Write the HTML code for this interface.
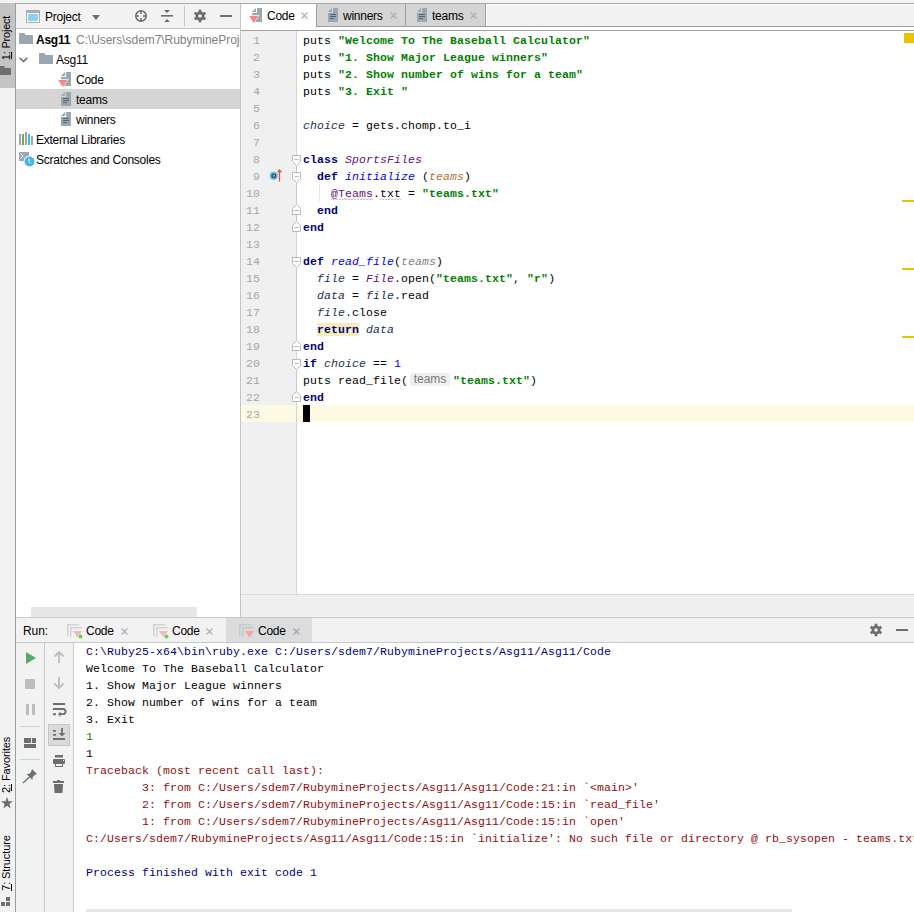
<!DOCTYPE html>
<html><head><meta charset="utf-8">
<style>
*{box-sizing:border-box;margin:0;padding:0}
html,body{width:914px;height:912px;overflow:hidden;background:#f2f2f2;position:relative}
body{font-family:"Liberation Sans",sans-serif;font-size:12px;color:#000}
.a{position:absolute}
.ui{font-family:"Liberation Sans",sans-serif;font-size:12px;white-space:pre;letter-spacing:-0.25px}
.mono{font-family:"Liberation Mono",monospace;font-size:11.5px;letter-spacing:0.1px;white-space:pre}
.ln{position:absolute;left:0;height:17px;line-height:17px}
.kw{color:#000080;font-weight:bold}
.st{color:#008000;font-weight:bold}
.cls{color:#660e7a;font-style:italic}
.mth{color:#0000ff;font-style:italic}
.lv{color:#1d3150;font-style:italic}
.iv{color:#660e7a}
.par{color:#b4703a;font-style:italic}
.unused{color:#808080;font-style:italic}
.num{color:#0000ff}
.csys{color:#000080}
.cerr{color:#8f0f0f}
.cinp{color:#008000}
.hl{background:#f6ebbc}
.wavy{}
.hint{display:inline-block;font-family:"Liberation Sans",sans-serif;font-size:12px;letter-spacing:0;color:#7a7a7a;background:#efefef;border-radius:3px;width:40px;height:13px;line-height:13px;margin:1px 3px 0 2px;text-align:center;vertical-align:top}
.gnum{position:absolute;left:0;width:19px;text-align:right;color:#a6a6a6;height:17px;line-height:17px}
</style></head><body>

<!-- top strip line -->
<div class="a" style="left:0;top:3px;width:914px;height:1px;background:#a9a9a9"></div>

<!-- left tool stripe -->
<div class="a" style="left:0;top:4px;width:15px;height:908px;background:#f2f2f2"></div>
<div class="a" style="left:0;top:3px;width:15px;height:85px;background:#c4c4c4"></div>
<div class="a" style="left:15px;top:3px;width:1px;height:909px;background:#9d9d9d"></div>

<!-- project panel header -->
<div class="a" style="left:16px;top:4px;width:224px;height:24px;background:#f2f2f2"></div>
<div class="a" style="left:16px;top:28px;width:224px;height:1px;background:#c9c9c9"></div>
<!-- project tree -->
<div class="a" style="left:16px;top:29px;width:224px;height:588px;background:#fff"></div>
<div class="a" style="left:16px;top:89px;width:224px;height:20px;background:#d5d5d5"></div>
<div class="a" style="left:31px;top:607px;width:166px;height:10px;background:#e6e6e6"></div>
<div class="a" style="left:240px;top:4px;width:1px;height:613px;background:#c4c4c4"></div>


<!-- ===== project header ===== -->
<svg class="a" style="left:26px;top:10px" width="14" height="13" viewBox="0 0 14 13">
<rect x="0" y="0" width="14" height="13" fill="#a4aeb6"/><rect x="1" y="3" width="12" height="9" fill="#fff"/><rect x="2" y="4" width="10" height="7" fill="#8fd1ec"/></svg>
<div class="a ui" style="left:45px;top:9px;line-height:16px">Project</div>
<svg class="a" style="left:92px;top:15px" width="8" height="5" viewBox="0 0 8 5"><path d="M0 0H8L4 5Z" fill="#6e6e6e"/></svg>
<svg class="a" style="left:134px;top:9px" width="14" height="14" viewBox="0 0 14 14"><circle cx="7" cy="7" r="5.2" fill="none" stroke="#6e6e6e" stroke-width="1.6"/><path d="M7 2v3M7 9v3M2 7h3M9 7h3" stroke="#6e6e6e" stroke-width="1.6"/></svg>
<svg class="a" style="left:160px;top:9px" width="14" height="14" viewBox="0 0 14 14"><path d="M4 1h6L7 4Z M4 13h6L7 10Z" fill="#6e6e6e"/><rect x="1" y="6" width="12" height="1.6" fill="#6e6e6e"/></svg>
<div class="a" style="left:184px;top:6px;width:1px;height:20px;background:#c9c9c9"></div>
<svg class="a" style="left:193px;top:9px" width="14" height="14" viewBox="-0.8 -0.8 15.6 15.6"><g fill="#6e6e6e"><circle cx="7" cy="7" r="5"/><rect x="5.5" y="0" width="3" height="14"/><rect x="5.5" y="0" width="3" height="14" transform="rotate(60 7 7)"/><rect x="5.5" y="0" width="3" height="14" transform="rotate(120 7 7)"/></g><circle cx="7" cy="7" r="2" fill="#f2f2f2"/></svg>
<div class="a" style="left:220px;top:15px;width:12px;height:2px;background:#6e6e6e"></div>

<!-- left stripe text -->
<div class="a ui" style="left:-21px;top:31px;width:54px;height:14px;line-height:14px;font-size:11px;letter-spacing:-0.2px;transform:rotate(-90deg);text-align:center">1: <span>Project</span></div>
<div class="a" style="left:11px;top:52px;width:1px;height:7px;background:#000"></div>
<svg class="a" style="left:0;top:66px" width="11" height="9" viewBox="0 0 11 9"><path d="M0 0H4L5 2H11V9H0Z" fill="#6e6e6e"/></svg>

<!-- ===== project tree ===== -->
<svg class="a" style="left:19px;top:33px" width="14" height="11" viewBox="0 0 14 11"><path d="M0 0H5L7 2H14V11H0Z" fill="#9aa7b0"/></svg>
<div class="a ui" style="left:36px;top:32px;line-height:16px;font-weight:bold">Asg11</div>
<div class="a ui" style="left:76px;top:32px;line-height:16px;color:#808080;width:164px;overflow:hidden;letter-spacing:-0.05px">C:\Users\sdem7\RubymineProjects\Asg11</div>
<svg class="a" style="left:19px;top:57px" width="9" height="6" viewBox="0 0 9 6"><path d="M0.7 0.7L4.5 4.5L8.3 0.7" fill="none" stroke="#6e6e6e" stroke-width="1.6"/></svg>
<svg class="a" style="left:39px;top:53px" width="14" height="11" viewBox="0 0 14 11"><path d="M0 0H5L7 2H14V11H0Z" fill="#9aa7b0"/></svg>
<div class="a ui" style="left:56px;top:52px;line-height:16px">Asg11</div>

<svg class="a" style="left:58px;top:72px" width="13" height="16" viewBox="0 0 13 16"><path d="M3 4L7 0V4Z" fill="#9aa7b0"/><rect x="8" y="0" width="5" height="14" fill="#9aa7b0"/><rect x="3" y="5" width="10" height="9" fill="#9aa7b0"/><path d="M-1 7.2H10.5L4.75 16Z" fill="#fff"/><path d="M0 8H9.5L4.75 15Z" fill="#f98787"/></svg>
<div class="a ui" style="left:76px;top:72px;line-height:16px">Code</div>

<svg class="a" style="left:61px;top:92px" width="10" height="14" viewBox="0 0 10 14"><path d="M0 4L4 0V4Z" fill="#9aa7b0"/><rect x="5" y="0" width="5" height="14" fill="#9aa7b0"/><rect x="0" y="5" width="10" height="9" fill="#9aa7b0"/><path d="M2 6.5h6M2 8.5h6M2 10.5h4" stroke="#5a646c" stroke-width="1"/></svg>
<div class="a ui" style="left:76px;top:92px;line-height:16px">teams</div>
<svg class="a" style="left:61px;top:112px" width="10" height="14" viewBox="0 0 10 14"><path d="M0 4L4 0V4Z" fill="#9aa7b0"/><rect x="5" y="0" width="5" height="14" fill="#9aa7b0"/><rect x="0" y="5" width="10" height="9" fill="#9aa7b0"/><path d="M2 6.5h6M2 8.5h6M2 10.5h4" stroke="#5a646c" stroke-width="1"/></svg>
<div class="a ui" style="left:76px;top:112px;line-height:16px">winners</div>

<svg class="a" style="left:19px;top:132px" width="14" height="13" viewBox="0 0 14 13"><rect x="0" y="2" width="2" height="11" fill="#9aa7b0"/><rect x="3" y="2" width="2" height="11" fill="#62b543"/><rect x="6" y="0" width="2" height="13" fill="#9aa7b0"/><rect x="9" y="2" width="2" height="11" fill="#40b6e0"/><rect x="12" y="4" width="2" height="9" fill="#9aa7b0"/></svg>
<div class="a ui" style="left:36px;top:132px;line-height:16px">External Libraries</div>
<svg class="a" style="left:19px;top:152px" width="16" height="15" viewBox="0 0 16 15"><rect x="0" y="0" width="10" height="9" fill="#9aa7b0"/><path d="M1.5 1.5L4 4L1.5 6.5" fill="none" stroke="#fff" stroke-width="1"/><circle cx="10.5" cy="9.5" r="6" fill="#fff"/><circle cx="10.5" cy="9.5" r="5" fill="#40b6e0"/><path d="M10 6.5V9.5L12 11.5" fill="none" stroke="#fff" stroke-width="1"/></svg>
<div class="a ui" style="left:36px;top:152px;line-height:16px">Scratches and Consoles</div>

<!-- editor tabs bar -->
<div class="a" style="left:241px;top:4px;width:673px;height:22px;background:#f2f2f2;border-top:1px solid #fff"></div>
<div class="a" style="left:241px;top:26px;width:673px;height:1px;background:#a0a0a0"></div>
<div class="a" style="left:241px;top:27px;width:673px;height:3px;background:#fff"></div>
<div class="a" style="left:241px;top:30px;width:673px;height:1px;background:#a0a0a0"></div>
<div class="a" style="left:241px;top:4px;width:75px;height:23px;background:#fff"></div>
<div class="a" style="left:316px;top:4px;width:170px;height:22px;background:#d4d4d4"></div>
<div class="a" style="left:316px;top:4px;width:1px;height:23px;background:#a0a0a0"></div>
<div class="a" style="left:405px;top:4px;width:1px;height:23px;background:#a0a0a0"></div>
<div class="a" style="left:485px;top:4px;width:1px;height:23px;background:#a0a0a0"></div>
<div class="a" style="left:486px;top:4px;width:1px;height:22px;background:#fff"></div>
<svg class="a" style="left:249px;top:8px" width="14" height="16" viewBox="0 0 14 16"><path d="M3 4L7 0V4Z" fill="#9aa7b0"/><rect x="8" y="0" width="5" height="14" fill="#9aa7b0"/><rect x="3" y="5" width="10" height="9" fill="#9aa7b0"/><path d="M-1 7.2H10.5L4.75 16Z" fill="#fff"/><path d="M0 8H9.5L4.75 15Z" fill="#f98787"/></svg>
<div class="a ui" style="left:267px;top:8px;line-height:16px">Code</div>
<svg class="a" style="left:301px;top:12px" width="7" height="7" viewBox="0 0 7 7"><path d="M0.5 0.5L6.5 6.5M6.5 0.5L0.5 6.5" stroke="#a8adb0" stroke-width="1.1"/></svg>
<svg class="a" style="left:328px;top:8px" width="10" height="14" viewBox="0 0 10 14"><path d="M0 4L4 0V4Z" fill="#9aa7b0"/><rect x="5" y="0" width="5" height="14" fill="#9aa7b0"/><rect x="0" y="5" width="10" height="9" fill="#9aa7b0"/><path d="M2 6.5h6M2 8.5h6M2 10.5h4" stroke="#5a646c" stroke-width="1"/></svg>
<div class="a ui" style="left:343px;top:8px;line-height:16px">winners</div>
<svg class="a" style="left:390px;top:12px" width="7" height="7" viewBox="0 0 7 7"><path d="M0.5 0.5L6.5 6.5M6.5 0.5L0.5 6.5" stroke="#a8adb0" stroke-width="1.1"/></svg>
<svg class="a" style="left:417px;top:8px" width="10" height="14" viewBox="0 0 10 14"><path d="M0 4L4 0V4Z" fill="#9aa7b0"/><rect x="5" y="0" width="5" height="14" fill="#9aa7b0"/><rect x="0" y="5" width="10" height="9" fill="#9aa7b0"/><path d="M2 6.5h6M2 8.5h6M2 10.5h4" stroke="#5a646c" stroke-width="1"/></svg>
<div class="a ui" style="left:432px;top:8px;line-height:16px">teams</div>
<svg class="a" style="left:470px;top:12px" width="7" height="7" viewBox="0 0 7 7"><path d="M0.5 0.5L6.5 6.5M6.5 0.5L0.5 6.5" stroke="#a8adb0" stroke-width="1.1"/></svg>
<!-- editor -->
<div class="a" style="left:241px;top:31px;width:673px;height:564px;background:#fff"></div>
<div class="a" style="left:241px;top:31px;width:55px;height:564px;background:#f0f0f0"></div>
<div class="a" style="left:296px;top:31px;width:1px;height:564px;background:#d5d5d5"></div>
<div class="a" style="left:241px;top:405px;width:673px;height:17px;background:#fffae3"></div>
<div class="a" style="left:296px;top:405px;width:1px;height:17px;background:#d5d5d5"></div>
<div class="a" style="left:241px;top:595px;width:673px;height:22px;background:#efefef"></div>
<div class="a" style="left:241px;top:594px;width:673px;height:1px;background:#d9d9d9"></div>

<!-- run header -->
<div class="a" style="left:16px;top:617px;width:898px;height:1px;background:#c9c9c9"></div>
<div class="a" style="left:16px;top:618px;width:898px;height:24px;background:#f2f2f2"></div>
<div class="a" style="left:16px;top:642px;width:898px;height:1px;background:#c9c9c9"></div>
<div class="a" style="left:226px;top:618px;width:86px;height:24px;background:#dcdcdc"></div>
<!-- run toolbars -->
<div class="a" style="left:16px;top:643px;width:28px;height:269px;background:#f2f2f2"></div>
<div class="a" style="left:44px;top:643px;width:1px;height:269px;background:#c9c9c9"></div>
<div class="a" style="left:45px;top:643px;width:28px;height:269px;background:#f2f2f2"></div>
<div class="a" style="left:73px;top:643px;width:1px;height:269px;background:#c9c9c9"></div>
<!-- console -->
<div class="a" style="left:74px;top:643px;width:840px;height:269px;background:#fff"></div>
<div class="a" style="left:86px;top:909px;width:706px;height:3px;background:#e6e6e6"></div>


<!-- ===== run header content ===== -->
<div class="a ui" style="left:23px;top:623px;line-height:16px;letter-spacing:-0.1px">Run:</div>
<svg class="a" style="left:67px;top:624px" width="17" height="16" viewBox="0 0 17 16"><path d="M0.75 12V0.75H12" fill="none" stroke="#cfd3d6" stroke-width="1.5"/><path d="M3.75 13V3.75H15" fill="none" stroke="#cfd3d6" stroke-width="1.5"/><path d="M6 7H15L10.5 13.5Z" fill="#f6b7b7"/><circle cx="13.5" cy="12.5" r="2.6" fill="#f2f2f2"/><circle cx="13.5" cy="12.5" r="2" fill="#5fcf63"/></svg>
<div class="a ui" style="left:86px;top:623px;line-height:16px">Code</div>
<svg class="a" style="left:121px;top:628px" width="7" height="7" viewBox="0 0 7 7"><path d="M0.5 0.5L6.5 6.5M6.5 0.5L0.5 6.5" stroke="#a8adb0" stroke-width="1.1"/></svg>
<svg class="a" style="left:153px;top:624px" width="17" height="16" viewBox="0 0 17 16"><path d="M0.75 12V0.75H12" fill="none" stroke="#cfd3d6" stroke-width="1.5"/><path d="M3.75 13V3.75H15" fill="none" stroke="#cfd3d6" stroke-width="1.5"/><path d="M6 7H15L10.5 13.5Z" fill="#f6b7b7"/><circle cx="13.5" cy="12.5" r="2.6" fill="#f2f2f2"/><circle cx="13.5" cy="12.5" r="2" fill="#5fcf63"/></svg>
<div class="a ui" style="left:172px;top:623px;line-height:16px">Code</div>
<svg class="a" style="left:206px;top:628px" width="7" height="7" viewBox="0 0 7 7"><path d="M0.5 0.5L6.5 6.5M6.5 0.5L0.5 6.5" stroke="#a8adb0" stroke-width="1.1"/></svg>
<svg class="a" style="left:239px;top:624px" width="17" height="16" viewBox="0 0 17 16"><path d="M0.75 12V0.75H12" fill="none" stroke="#c4c8cb" stroke-width="1.5"/><path d="M3.75 13V3.75H15" fill="none" stroke="#c4c8cb" stroke-width="1.5"/><path d="M6 7H15L10.5 13.5Z" fill="#f4a3a3"/></svg>
<div class="a ui" style="left:258px;top:623px;line-height:16px">Code</div>
<svg class="a" style="left:293px;top:628px" width="7" height="7" viewBox="0 0 7 7"><path d="M0.5 0.5L6.5 6.5M6.5 0.5L0.5 6.5" stroke="#a0a5a8" stroke-width="1.1"/></svg>
<svg class="a" style="left:869px;top:623px" width="14" height="14" viewBox="-0.8 -0.8 15.6 15.6"><g fill="#6e6e6e"><circle cx="7" cy="7" r="5"/><rect x="5.5" y="0" width="3" height="14"/><rect x="5.5" y="0" width="3" height="14" transform="rotate(60 7 7)"/><rect x="5.5" y="0" width="3" height="14" transform="rotate(120 7 7)"/></g><circle cx="7" cy="7" r="2" fill="#f2f2f2"/></svg>
<div class="a" style="left:896px;top:629px;width:12px;height:2px;background:#6e6e6e"></div>

<!-- ===== run toolbar icons ===== -->
<svg class="a" style="left:26px;top:652px" width="10" height="12" viewBox="0 0 10 12"><path d="M0 0L10 6L0 12Z" fill="#59a869"/></svg>
<div class="a" style="left:25px;top:679px;width:10px;height:10px;background:#bdbdbd"></div>
<div class="a" style="left:26px;top:704px;width:3px;height:11px;background:#bdbdbd"></div>
<div class="a" style="left:32px;top:704px;width:3px;height:11px;background:#bdbdbd"></div>
<div class="a" style="left:20px;top:726px;width:20px;height:1px;background:#d0d0d0"></div>
<div class="a" style="left:24px;top:738px;width:7px;height:5px;background:#6e6e6e"></div>
<div class="a" style="left:32px;top:738px;width:4px;height:5px;background:#6e6e6e"></div>
<div class="a" style="left:24px;top:744px;width:12px;height:4px;background:#6e6e6e"></div>
<div class="a" style="left:20px;top:759px;width:20px;height:1px;background:#d0d0d0"></div>
<svg class="a" style="left:22px;top:769px" width="16" height="15" viewBox="0 0 16 15"><path d="M10 0L15 5L12.5 6L10.5 8.5L10.5 11L4.5 5L7 5L9 3Z" fill="#6e6e6e"/><path d="M7.5 8L1 14" stroke="#6e6e6e" stroke-width="1.3"/></svg>

<svg class="a" style="left:53px;top:651px" width="12" height="12" viewBox="0 0 12 12"><path d="M6 12V1.5M1.5 5.5L6 1L10.5 5.5" fill="none" stroke="#bdbdbd" stroke-width="1.9"/></svg>
<svg class="a" style="left:53px;top:677px" width="12" height="12" viewBox="0 0 12 12"><path d="M6 0V10.5M1.5 6.5L6 11L10.5 6.5" fill="none" stroke="#bdbdbd" stroke-width="1.9"/></svg>
<svg class="a" style="left:53px;top:702px" width="14" height="15" viewBox="0 0 14 15"><path d="M0 2H12M0 7H10A2.6 2.6 0 0 1 10 12.2H7" fill="none" stroke="#6e6e6e" stroke-width="1.8"/><path d="M7.5 9.4L5 12.2L7.5 15Z" fill="#6e6e6e"/><rect x="0" y="11.2" width="3" height="2" fill="#6e6e6e"/></svg>
<div class="a" style="left:48px;top:724px;width:22px;height:22px;background:#dadada;border:1px solid #c6c6c6"></div>
<svg class="a" style="left:53px;top:728px" width="13" height="13" viewBox="0 0 13 13"><rect x="0" y="2" width="3" height="1.7" fill="#6e6e6e"/><rect x="0" y="6" width="3" height="1.7" fill="#6e6e6e"/><rect x="0" y="10" width="12" height="2" fill="#6e6e6e"/><path d="M9 0V7" stroke="#6e6e6e" stroke-width="1.8"/><path d="M5.5 5H12.5L9 8.5Z" fill="#6e6e6e"/></svg>
<svg class="a" style="left:53px;top:755px" width="12" height="12" viewBox="0 0 12 12"><rect x="2" y="0" width="8" height="2.5" fill="#6e6e6e"/><rect x="0" y="4" width="12" height="5" rx="1" fill="#6e6e6e"/><rect x="2" y="8" width="8" height="4" fill="#6e6e6e"/><rect x="3" y="9" width="6" height="2" fill="#f2f2f2"/><rect x="10" y="5" width="1" height="1" fill="#f2f2f2"/></svg>
<svg class="a" style="left:53px;top:780px" width="11" height="13" viewBox="0 0 11 13"><rect x="0" y="1" width="11" height="2" fill="#6e6e6e"/><rect x="4" y="0" width="3" height="1" fill="#6e6e6e"/><path d="M1 4H10L9.5 12.5Q9.5 13 9 13H2Q1.5 13 1.5 12.5Z" fill="#6e6e6e"/></svg>

<!-- ===== left stripe bottom ===== -->
<div class="a" style="left:11px;top:784px;width:1px;height:7px;background:#000"></div>
<div class="a" style="left:11px;top:884px;width:1px;height:7px;background:#000"></div>
<div class="a ui" style="left:-22px;top:758px;width:56px;height:14px;line-height:14px;font-size:11px;letter-spacing:-0.1px;transform:rotate(-90deg);text-align:center">2: Favorites</div>
<svg class="a" style="left:1px;top:797px" width="12" height="12" viewBox="0 0 12 12"><path d="M6 0L7.5 4.2H12L8.4 6.9L9.7 11.5L6 8.7L2.3 11.5L3.6 6.9L0 4.2H4.5Z" fill="#6e6e6e"/></svg>
<div class="a ui" style="left:-22px;top:856px;width:56px;height:14px;line-height:14px;font-size:11px;letter-spacing:-0.1px;transform:rotate(-90deg);text-align:center">7: Structure</div>
<svg class="a" style="left:1px;top:897px" width="10" height="10" viewBox="0 0 10 10"><rect x="5" y="0" width="4" height="4" fill="#6e6e6e"/><rect x="0" y="5" width="4" height="4" fill="#6e6e6e"/><rect x="5" y="5" width="4" height="4" fill="#6e6e6e"/></svg>

<svg class="a" style="left:292px;top:155px" width="9" height="11" viewBox="0 0 9 11"><path d="M0.5 0.5H8.5V6.5L4.5 10.5L0.5 6.5Z" fill="#fff" stroke="#b9b9b9" stroke-width="1"/><path d="M2.5 4.5H6.5" stroke="#b9b9b9" stroke-width="1"/></svg>
<svg class="a" style="left:292px;top:172px" width="9" height="11" viewBox="0 0 9 11"><path d="M0.5 0.5H8.5V6.5L4.5 10.5L0.5 6.5Z" fill="#fff" stroke="#b9b9b9" stroke-width="1"/><path d="M2.5 4.5H6.5" stroke="#b9b9b9" stroke-width="1"/></svg>
<svg class="a" style="left:292px;top:257px" width="9" height="11" viewBox="0 0 9 11"><path d="M0.5 0.5H8.5V6.5L4.5 10.5L0.5 6.5Z" fill="#fff" stroke="#b9b9b9" stroke-width="1"/><path d="M2.5 4.5H6.5" stroke="#b9b9b9" stroke-width="1"/></svg>
<svg class="a" style="left:292px;top:359px" width="9" height="11" viewBox="0 0 9 11"><path d="M0.5 0.5H8.5V6.5L4.5 10.5L0.5 6.5Z" fill="#fff" stroke="#b9b9b9" stroke-width="1"/><path d="M2.5 4.5H6.5" stroke="#b9b9b9" stroke-width="1"/></svg>
<svg class="a" style="left:292px;top:204px" width="9" height="11" viewBox="0 0 9 11"><path d="M0.5 10.5H8.5V4.5L4.5 0.5L0.5 4.5Z" fill="#fff" stroke="#b9b9b9" stroke-width="1"/><path d="M2.5 6.5H6.5" stroke="#b9b9b9" stroke-width="1"/></svg>
<svg class="a" style="left:292px;top:221px" width="9" height="11" viewBox="0 0 9 11"><path d="M0.5 10.5H8.5V4.5L4.5 0.5L0.5 4.5Z" fill="#fff" stroke="#b9b9b9" stroke-width="1"/><path d="M2.5 6.5H6.5" stroke="#b9b9b9" stroke-width="1"/></svg>
<svg class="a" style="left:292px;top:340px" width="9" height="11" viewBox="0 0 9 11"><path d="M0.5 10.5H8.5V4.5L4.5 0.5L0.5 4.5Z" fill="#fff" stroke="#b9b9b9" stroke-width="1"/><path d="M2.5 6.5H6.5" stroke="#b9b9b9" stroke-width="1"/></svg>
<svg class="a" style="left:292px;top:391px" width="9" height="11" viewBox="0 0 9 11"><path d="M0.5 10.5H8.5V4.5L4.5 0.5L0.5 4.5Z" fill="#fff" stroke="#b9b9b9" stroke-width="1"/><path d="M2.5 6.5H6.5" stroke="#b9b9b9" stroke-width="1"/></svg>
<!-- fold connector lines -->
<div class="a" style="left:296px;top:165px;width:1px;height:7px;background:#c8c8c8"></div>
<div class="a" style="left:296px;top:182px;width:1px;height:23px;background:#c8c8c8"></div>
<div class="a" style="left:296px;top:215px;width:1px;height:7px;background:#c8c8c8"></div>
<div class="a" style="left:296px;top:267px;width:1px;height:74px;background:#c8c8c8"></div>
<div class="a" style="left:296px;top:369px;width:1px;height:23px;background:#c8c8c8"></div>
<!-- override marker line 9 -->
<svg class="a" style="left:269px;top:168px" width="14" height="14" viewBox="0 0 14 14"><circle cx="4.8" cy="7.8" r="4" fill="#5fb4e0"/><circle cx="4.8" cy="7.8" r="1.8" fill="none" stroke="#3c3f41" stroke-width="1.1"/><path d="M10.5 13.5V2" stroke="#d9503f" stroke-width="1.3"/><path d="M8 4.2L10.5 1L13 4.2Z" fill="#d9503f"/></svg>
<!-- indent guide -->
<div class="a" style="left:319px;top:184px;width:1px;height:17px;background:#e4e4e4"></div>
<!-- wavy underlines -->
<svg class="a" style="left:0;top:0" width="914" height="912"><path d="M331 200 l1.5 -1.5 l1.5 1.5 l1.5 -1.5 l1.5 1.5 l1.5 -1.5 l1.5 1.5 l1.5 -1.5 l1.5 1.5 l1.5 -1.5 l1.5 1.5 l1.5 -1.5 l1.5 1.5 l1.5 -1.5 l1.5 1.5 l1.5 -1.5 l1.5 1.5 l1.5 -1.5 l1.5 1.5 l1.5 -1.5 l1.5 1.5 l1.5 -1.5 l1.5 1.5 l1.5 -1.5 l1.5 1.5 l1.5 -1.5 l1.5 1.5 l1.5 -1.5 l1.5 1.5 M380 200 l1.5 -1.5 l1.5 1.5 l1.5 -1.5 l1.5 1.5 l1.5 -1.5 l1.5 1.5 l1.5 -1.5 l1.5 1.5 l1.5 -1.5 l1.5 1.5 l1.5 -1.5 l1.5 1.5 l1.5 -1.5 l1.5 1.5" fill="none" stroke="#c4c4c4" stroke-width="1"/></svg>
<!-- error stripe marks -->
<div class="a" style="left:904px;top:33px;width:10px;height:10px;background:#eac400"></div>
<div class="a" style="left:902px;top:200px;width:12px;height:2px;background:#eac400"></div>
<div class="a" style="left:902px;top:268px;width:12px;height:2px;background:#eac400"></div>
<div class="a" style="left:902px;top:336px;width:12px;height:2px;background:#eac400"></div>

<div id="code" class="a mono" style="left:303px;top:32px;width:611px;height:564px">
<div class="ln" style="top:0px">puts <span class="st">"Welcome To The Baseball Calculator"</span></div>
<div class="ln" style="top:17px">puts <span class="st">"1. Show Major League winners"</span></div>
<div class="ln" style="top:34px">puts <span class="st">"2. Show number of wins for a team"</span></div>
<div class="ln" style="top:51px">puts <span class="st">"3. Exit "</span></div>
<div class="ln" style="top:85px"><span class="lv">choice</span> = gets.chomp.to_i</div>
<div class="ln" style="top:119px"><span class="kw">class</span> <span class="cls">SportsFiles</span></div>
<div class="ln" style="top:136px">  <span class="kw">def</span> <span class="mth">initialize</span> (<span class="par">teams</span>)</div>
<div class="ln" style="top:153px">    <span class="iv wavy">@Teams</span>.<span class="wavy">txt</span> = <span class="st">"teams.txt"</span></div>
<div class="ln" style="top:170px">  <span class="kw">end</span></div>
<div class="ln" style="top:187px"><span class="kw">end</span></div>
<div class="ln" style="top:221px"><span class="kw">def</span> <span class="mth">read_file</span>(<span class="unused">teams</span>)</div>
<div class="ln" style="top:238px">  <span class="lv">file</span> = <span class="cls">File</span>.open(<span class="st">"teams.txt"</span>, <span class="st">"r"</span>)</div>
<div class="ln" style="top:255px">  <span class="lv">data</span> = <span class="lv">file</span>.read</div>
<div class="ln" style="top:272px">  <span class="lv">file</span>.close</div>
<div class="ln" style="top:289px">  <span class="kw hl">return</span> <span class="lv">data</span></div>
<div class="ln" style="top:306px"><span class="kw">end</span></div>
<div class="ln" style="top:323px"><span class="kw">if</span> <span class="lv">choice</span> == <span class="num">1</span></div>
<div class="ln" style="top:340px">puts read_file(<span class="hint">teams</span><span class="st">"teams.txt"</span>)</div>
<div class="ln" style="top:357px"><span class="kw">end</span></div>
<div class="a" style="left:0;top:373px;width:7px;height:17px;background:#000"></div>
</div>
<div id="gutter" class="a mono" style="left:241px;top:32px;width:24px;height:400px">
<div class="gnum" style="top:0px">1</div>
<div class="gnum" style="top:17px">2</div>
<div class="gnum" style="top:34px">3</div>
<div class="gnum" style="top:51px">4</div>
<div class="gnum" style="top:68px">5</div>
<div class="gnum" style="top:85px">6</div>
<div class="gnum" style="top:102px">7</div>
<div class="gnum" style="top:119px">8</div>
<div class="gnum" style="top:136px">9</div>
<div class="gnum" style="top:153px">10</div>
<div class="gnum" style="top:170px">11</div>
<div class="gnum" style="top:187px">12</div>
<div class="gnum" style="top:204px">13</div>
<div class="gnum" style="top:221px">14</div>
<div class="gnum" style="top:238px">15</div>
<div class="gnum" style="top:255px">16</div>
<div class="gnum" style="top:272px">17</div>
<div class="gnum" style="top:289px">18</div>
<div class="gnum" style="top:306px">19</div>
<div class="gnum" style="top:323px">20</div>
<div class="gnum" style="top:340px">21</div>
<div class="gnum" style="top:357px">22</div>
<div class="gnum" style="top:374px">23</div>
</div>
<div id="console" class="a mono" style="left:86px;top:643px;width:828px;height:260px;overflow:hidden">
<div class="ln csys" style="top:0px">C:\Ruby25-x64\bin\ruby.exe C:/Users/sdem7/RubymineProjects/Asg11/Asg11/Code</div>
<div class="ln c" style="top:17px">Welcome To The Baseball Calculator</div>
<div class="ln c" style="top:34px">1. Show Major League winners</div>
<div class="ln c" style="top:51px">2. Show number of wins for a team</div>
<div class="ln c" style="top:68px">3. Exit</div>
<div class="ln cinp" style="top:85px">1</div>
<div class="ln c" style="top:102px">1</div>
<div class="ln cerr" style="top:119px">Traceback (most recent call last):</div>
<div class="ln cerr" style="top:136px">        3: from C:/Users/sdem7/RubymineProjects/Asg11/Asg11/Code:21:in `&lt;main&gt;'</div>
<div class="ln cerr" style="top:153px">        2: from C:/Users/sdem7/RubymineProjects/Asg11/Asg11/Code:15:in `read_file'</div>
<div class="ln cerr" style="top:170px">        1: from C:/Users/sdem7/RubymineProjects/Asg11/Asg11/Code:15:in `open'</div>
<div class="ln cerr" style="top:187px">C:/Users/sdem7/RubymineProjects/Asg11/Asg11/Code:15:in `initialize': No such file or directory @ rb_sysopen - teams.txt (Errno::ENOENT)</div>
<div class="ln csys" style="top:221px">Process finished with exit code 1</div>
</div>

</body></html>
